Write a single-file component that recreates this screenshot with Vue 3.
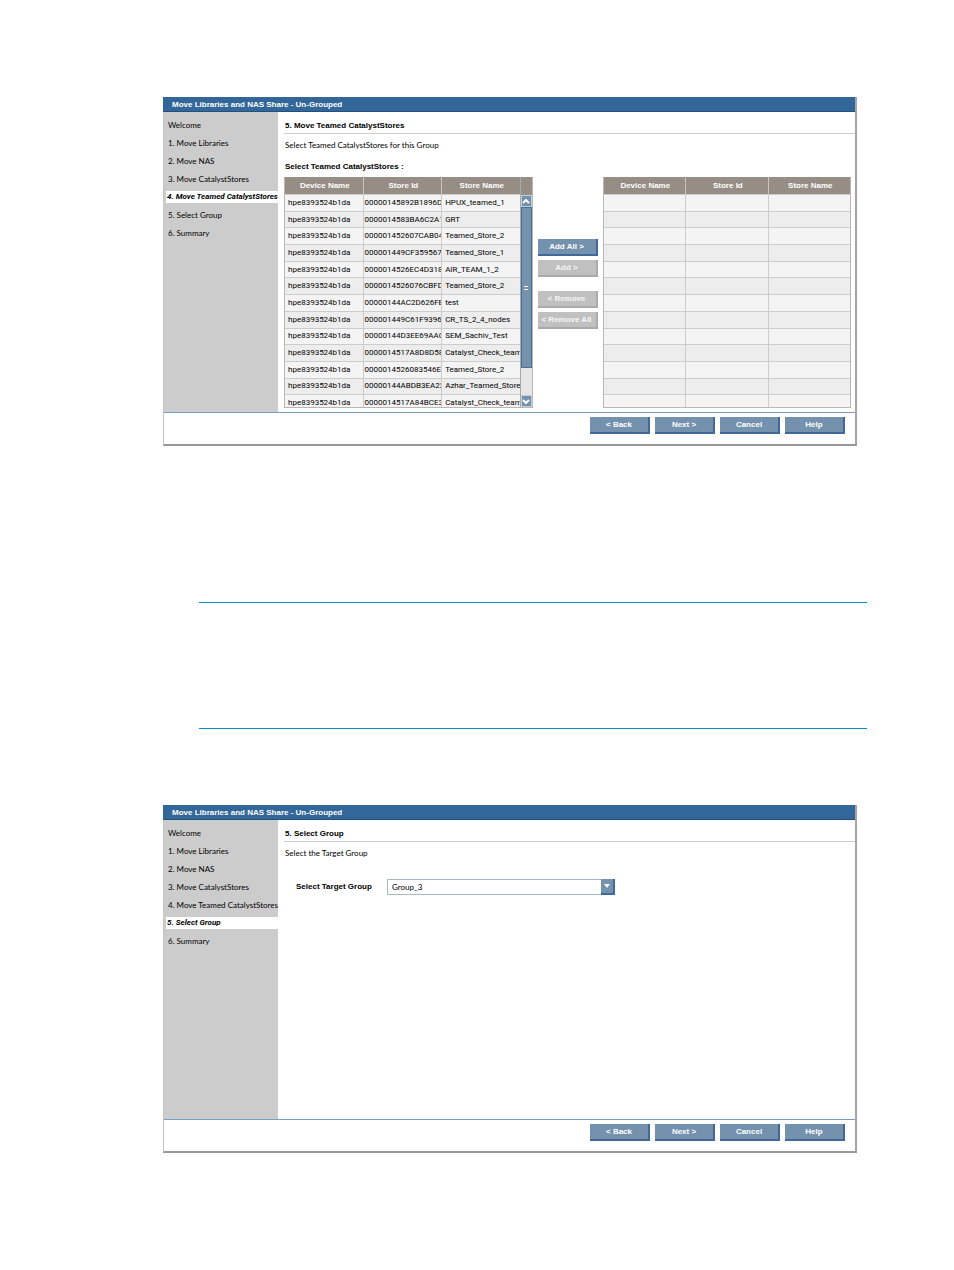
<script setup>
import { ref } from 'vue'

const columns = ['Device Name', 'Store Id', 'Store Name']

const stores = ref([
  { device: 'hpe8393524b1da', id: '00000145892B1896D', name: 'HPUX_teamed_1' },
  { device: 'hpe8393524b1da', id: '0000014583BA6C2A1', name: 'GRT' },
  { device: 'hpe8393524b1da', id: '000001452607CAB04', name: 'Teamed_Store_2' },
  { device: 'hpe8393524b1da', id: '000001449CF359567', name: 'Teamed_Store_1' },
  { device: 'hpe8393524b1da', id: '0000014526EC4D318', name: 'AIR_TEAM_1_2' },
  { device: 'hpe8393524b1da', id: '0000014526076CBFD', name: 'Teamed_Store_2' },
  { device: 'hpe8393524b1da', id: '00000144AC2D626FE', name: 'test' },
  { device: 'hpe8393524b1da', id: '000001449C61F9396', name: 'CR_TS_2_4_nodes' },
  { device: 'hpe8393524b1da', id: '00000144D3EE69AAC', name: 'SEM_Sachiv_Test' },
  { device: 'hpe8393524b1da', id: '0000014517A8D8D58', name: 'Catalyst_Check_team' },
  { device: 'hpe8393524b1da', id: '0000014526083546E', name: 'Teamed_Store_2' },
  { device: 'hpe8393524b1da', id: '00000144ABDB3EA22', name: 'Azhar_Teamed_Store' },
  { device: 'hpe8393524b1da', id: '0000014517A84BCE3', name: 'Catalyst_Check_team' }
])

const steps = [
  'Welcome',
  '1. Move Libraries',
  '2. Move NAS',
  '3. Move CatalystStores',
  '4. Move Teamed CatalystStores',
  '5. Select Group',
  '6. Summary'
]

const footerButtons = ['< Back', 'Next >', 'Cancel', 'Help']

const targetGroup = ref('Group_3')
</script>

<template>
  <main class="page">
    <section class="dialog">
      <h1 class="dialog-title">Move Libraries and NAS Share - Un-Grouped</h1>
      <div class="dialog-body">
        <ol class="steps">
          <li v-for="(step, i) in steps" :key="step" :class="['step', { active: i === 4 }]">{{ step }}</li>
        </ol>
        <div class="content">
          <h2 class="heading">5. Move Teamed CatalystStores</h2>
          <p class="description">Select Teamed CatalystStores for this Group</p>
          <h3 class="caption">Select Teamed CatalystStores :</h3>
          <div class="picker">
            <div class="grid-box">
              <div class="grid-clip">
                <table class="grid">
                  <thead>
                    <tr><th v-for="col in columns" :key="col">{{ col }}</th></tr>
                  </thead>
                  <tbody>
                    <tr v-for="(store, i) in stores" :key="i">
                      <td>{{ store.device }}</td>
                      <td class="store-id">{{ store.id }}</td>
                      <td>{{ store.name }}</td>
                    </tr>
                  </tbody>
                </table>
              </div>
              <div class="scroll">
                <div class="scroll-head"></div>
                <button class="scroll-button" aria-label="Scroll up">
                  <svg width="8" height="5" viewBox="0 0 8 5"><path d="M1 4L4 1L7 4" fill="none" stroke="#fff" stroke-width="2" /></svg>
                </button>
                <div class="scroll-thumb"><span class="grip"></span></div>
                <div class="scroll-track"></div>
                <button class="scroll-button" aria-label="Scroll down">
                  <svg width="8" height="5" viewBox="0 0 8 5"><path d="M1 1L4 4L7 1" fill="none" stroke="#fff" stroke-width="2" /></svg>
                </button>
              </div>
            </div>

            <div class="actions">
              <button class="button">Add All &gt;</button>
              <button class="button" disabled>Add &gt;</button>
              <button class="button second-pair" disabled>&lt; Remove</button>
              <button class="button" disabled>&lt; Remove All</button>
            </div>

            <div class="grid-box">
              <div class="grid-clip">
                <table class="grid">
                  <thead>
                    <tr><th v-for="col in columns" :key="col">{{ col }}</th></tr>
                  </thead>
                  <tbody>
                    <tr v-for="n in 13" :key="n">
                      <td v-for="col in columns" :key="col"></td>
                    </tr>
                  </tbody>
                </table>
              </div>
            </div>
          </div>
        </div>
      </div>
      <footer class="dialog-footer">
        <button v-for="label in footerButtons" :key="label" class="button">{{ label }}</button>
      </footer>
    </section>

    <div class="note"></div>

    <section class="dialog">
      <h1 class="dialog-title">Move Libraries and NAS Share - Un-Grouped</h1>
      <div class="dialog-body">
        <ol class="steps">
          <li v-for="(step, i) in steps" :key="step" :class="['step', { active: i === 5 }]">{{ step }}</li>
        </ol>
        <div class="content">
          <h2 class="heading">5. Select Group</h2>
          <p class="description">Select the Target Group</p>
          <div class="field">
            <label for="target-group">Select Target Group</label>
            <div class="select-box">
              <select id="target-group" v-model="targetGroup">
                <option>Group_3</option>
              </select>
              <span class="select-arrow">
                <svg width="6" height="4" viewBox="0 0 6 4"><path d="M0 0H6L3 4Z" fill="#fff" /></svg>
              </span>
            </div>
          </div>
        </div>
      </div>
      <footer class="dialog-footer">
        <button v-for="label in footerButtons" :key="label" class="button">{{ label }}</button>
      </footer>
    </section>
  </main>
</template>

<style>
body {
  margin: 0;
  background: #fff;
}
</style>

<style scoped>
* {
  box-sizing: border-box;
}

.page {
  padding: 97px 97px 117px 163px;
  font-family: Lato, "Liberation Sans", Arial, sans-serif;
  font-size: 8px;
  line-height: 12px;
  color: #000;
}

h1,
h2,
h3,
p,
ol {
  margin: 0;
  padding: 0;
}

h1,
h2,
h3 {
  font: bold 8px/12px "Liberation Sans", Arial, sans-serif;
}

.dialog {
  border: 1px solid #c4c4c4;
  border-top: 0;
  border-right: 2px solid #a4a4a4;
  border-bottom: 2px solid #989898;
}

.dialog-title {
  height: 15px;
  margin-left: -1px;
  padding-left: 9px;
  border-bottom: 1px solid #24507c;
  background: #336699;
  color: #fff;
  line-height: 15px;
}

.dialog-body {
  display: flex;
  min-height: 299px;
}

.steps {
  flex: 0 0 114px;
  min-width: 0;
  padding: 4px 0 0 2px;
  background: #ccc;
  list-style: none;
}

.step {
  height: 12px;
  margin: 3px 0 6px;
  padding-left: 2px;
  white-space: nowrap;
}

.step.active {
  padding-left: 1px;
  background: #fff;
  font: italic bold 8px/12px Roboto, "Liberation Sans", sans-serif;
}

.content {
  flex: 1;
  min-width: 0;
  padding: 8px 4px 4px 6px;
}

.heading {
  height: 14px;
  margin-right: -4px;
  padding-left: 1px;
  border-bottom: 1px solid #ccc;
}

.description {
  padding: 5px 0 0 1px;
}

.caption {
  padding: 10px 0 4px 1px;
}

.picker {
  display: flex;
  gap: 5px;
}

.grid-box {
  display: flex;
  flex: 1;
  min-width: 0;
  height: 231px;
  border: 1px solid #bbb6b2;
  border-top: 0;
}

.grid-clip {
  flex: 1;
  min-width: 0;
  overflow: hidden;
}

.grid {
  width: 100%;
  height: 234px;
  table-layout: fixed;
  border-collapse: separate;
  border-spacing: 0;
}

.grid th {
  height: 17px;
  padding: 0 0 0 2px;
  border-right: 1px solid #c9c4bf;
  background: #968d85;
  color: #fff;
  font: bold 8px/12px "Liberation Sans", Arial, sans-serif;
}

.grid th:last-child {
  width: 33%;
}

.grid td {
  padding: 0 0 0 3px;
  border-top: 1px solid #ccc;
  border-right: 1px solid #ccc;
  background: #f4f4f4;
  font-family: Roboto, "Liberation Sans", sans-serif;
  white-space: nowrap;
  overflow: hidden;
}

.grid .store-id {
  padding-left: 1px;
}

.grid tr:nth-child(even) td {
  background: #ededed;
}

.grid th:last-child,
.grid td:last-child {
  border-right: 0;
}

.scroll {
  display: flex;
  flex-direction: column;
  width: 12px;
  border-left: 1px solid #aaa;
}

.scroll-head {
  height: 18px;
  background: #968d85;
}

.scroll-button {
  display: flex;
  align-items: center;
  justify-content: center;
  height: 12px;
  padding: 0;
  border: 1px solid #c3d0dd;
  background: #7491ae;
}

.scroll-thumb {
  display: flex;
  align-items: center;
  justify-content: center;
  height: 161px;
  border: 1px solid #4d7196;
  background: #7491ae;
}

.grip {
  width: 4px;
  height: 4px;
  border: 1px solid #fff;
  border-width: 1px 0;
}

.scroll-track {
  flex: 1;
  background: #e6e6e6;
}

.actions {
  display: flex;
  flex-direction: column;
  flex: 0 0 60px;
  gap: 4px;
  padding-top: 62px;
}

.second-pair {
  margin-top: 10px;
}

.button {
  width: 60px;
  height: 17px;
  padding: 0;
  border: 0 solid #406898;
  border-width: 0 2px 2px 0;
  background: #7491ae;
  color: #fff;
  font: bold 8px/15px "Liberation Sans", Arial, sans-serif;
  white-space: nowrap;
}

.button:disabled {
  border-color: #aaa;
  background: #c0c0c0;
  color: #f6f6f6;
}

.dialog-footer {
  display: flex;
  justify-content: flex-end;
  gap: 5px;
  height: 32px;
  padding: 4px 10px 0 0;
  border-top: 1px solid #7b9dc4;
}

.note {
  height: 127px;
  margin: 156px -10px 76px 36px;
  border-top: 1px solid #0090c4;
  border-bottom: 1px solid #0090c4;
}

.field {
  display: flex;
  align-items: center;
  padding: 20px 0 0 12px;
}

.field label {
  width: 91px;
  font: bold 8px/12px "Liberation Sans", Arial, sans-serif;
}

.select-box {
  display: flex;
  position: relative;
  width: 228px;
  height: 16px;
}

select {
  flex: 1;
  padding: 0 16px 0 4px;
  border: 1px solid #a9b8c7;
  border-radius: 0;
  background: #fff;
  color: #000;
  font: inherit;
  appearance: none;
}

.select-arrow {
  display: flex;
  align-items: center;
  justify-content: center;
  position: absolute;
  top: 0;
  right: 0;
  bottom: 0;
  width: 14px;
  border: 0 solid #406898;
  border-width: 0 2px 2px 0;
  background: #7491ae;
  pointer-events: none;
}
</style>
